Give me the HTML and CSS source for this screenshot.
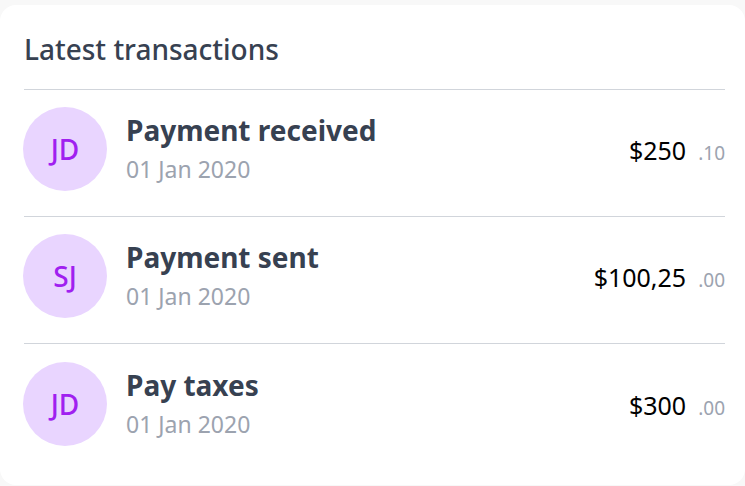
FILE: index.html
```html
<!DOCTYPE html>
<html>
<head>
<meta charset="utf-8">
<link rel="stylesheet" href="styles.css">
</head>
<body>
<div class="card">
  <h2 class="title">Latest transactions</h2>
  <ul class="list">
    <li class="row">
      <div class="avatar">JD</div>
      <div class="info">
        <div class="name">Payment received</div>
        <div class="date">01 Jan 2020</div>
      </div>
      <div class="amount"><span class="main">$250</span><span class="cents">.10</span></div>
    </li>
    <li class="row">
      <div class="avatar">SJ</div>
      <div class="info">
        <div class="name">Payment sent</div>
        <div class="date">01 Jan 2020</div>
      </div>
      <div class="amount"><span class="main">$100,25</span><span class="cents">.00</span></div>
    </li>
    <li class="row">
      <div class="avatar">JD</div>
      <div class="info">
        <div class="name">Pay taxes</div>
        <div class="date">01 Jan 2020</div>
      </div>
      <div class="amount"><span class="main">$300</span><span class="cents">.00</span></div>
    </li>
  </ul>
</div>
</body>
</html>
```
FILE: styles.css
```css
* { box-sizing: border-box; }
html, body { margin: 0; padding: 0; }
body {
  background: #f8f8f8;
  font-family: "Noto Sans", "Open Sans", sans-serif;
  width: 745px;
  height: 486px;
  overflow: hidden;
}
.card {
  margin-top: 5px;
  background: #ffffff;
  border-radius: 16px;
  padding: 0 20px 0 24px;
  height: 480px;
}
.title {
  margin: 0;
  height: 85px;
  display: flex;
  align-items: center;
  padding-top: 4px;
  font-size: 28px;
  font-weight: 500;
  color: #374151;
  border-bottom: 1px solid #d1d5db;
}
.list { list-style: none; margin: 0; padding: 0; }
.row {
  display: flex;
  align-items: center;
  height: 127px;
  padding: 17px 0 25px;
  border-bottom: 1px solid #d1d5db;
}
.row:last-child { border-bottom: none; }
.avatar {
  width: 84px;
  height: 84px;
  border-radius: 50%;
  background: #e9d5ff;
  color: #a020f0;
  font-size: 28px;
  font-weight: 500;
  display: flex;
  align-items: center;
  justify-content: center;
  margin-left: -1px;
  flex-shrink: 0;
}
.info {
  flex: 1;
  margin-left: 19px;
  display: flex;
  flex-direction: column;
}
.name {
  font-size: 28px;
  font-weight: 700;
  color: #374151;
  line-height: 34px;
}
.date {
  font-size: 23px;
  color: #9ca3af;
  line-height: 32px;
  margin-top: 6px;
}
.amount {
  display: flex;
  align-items: baseline;
  margin-top: 2px;
}
.main {
  font-size: 25px;
  color: #000;
}
.cents {
  font-size: 19px;
  color: #9ca3af;
  margin-left: 12px;
}
```
